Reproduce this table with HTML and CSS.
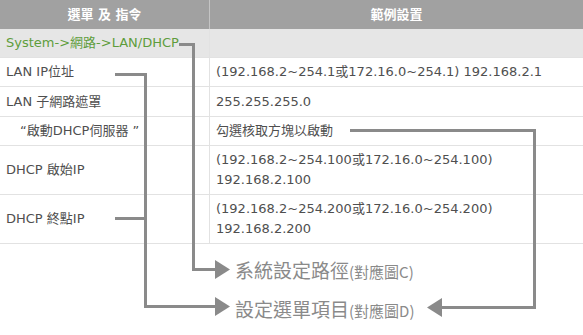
FILE: index.html
```html
<!DOCTYPE html>
<html lang="zh-Hant">
<head>
<meta charset="utf-8">
<title>LAN/DHCP</title>
<link rel="stylesheet" href="styles.css">
</head>
<body>
<div class="page">
  <div class="table">
    <div class="row head">
      <div class="cell">選單 及 指令</div>
      <div class="cell">範例設置</div>
    </div>
    <div class="row path">
      <div class="cell green">System-&gt;網路-&gt;LAN/DHCP</div>
      <div class="cell"></div>
    </div>
    <div class="row">
      <div class="cell">LAN IP位址</div>
      <div class="cell">(192.168.2~254.1或172.16.0~254.1) 192.168.2.1</div>
    </div>
    <div class="row tall1">
      <div class="cell">LAN 子網路遮罩</div>
      <div class="cell">255.255.255.0</div>
    </div>
    <div class="row">
      <div class="cell indent">“啟動DHCP伺服器 ”</div>
      <div class="cell">勾選核取方塊以啟動</div>
    </div>
    <div class="row double">
      <div class="cell">DHCP 啟始IP</div>
      <div class="cell">(192.168.2~254.100或172.16.0~254.100)<br>192.168.2.100</div>
    </div>
    <div class="row double">
      <div class="cell">DHCP 終點IP</div>
      <div class="cell">(192.168.2~254.200或172.16.0~254.200)<br>192.168.2.200</div>
    </div>
  </div>
  <div class="notes">
    <div class="note">系統設定路徑<small>(對應圖C)</small></div>
    <div class="note">設定選單項目<small>(對應圖D)</small></div>
  </div>
  <svg class="connectors" width="583" height="335" viewBox="0 0 583 335">
    <g fill="none" stroke="#8a8a8a" stroke-width="3">
      <polyline points="179,44.5 193.5,44.5 193.5,269.5 216,269.5"/>
      <polyline points="115,74.5 145.5,74.5 145.5,306.5 216,306.5"/>
      <polyline points="115,218.5 145.5,218.5"/>
      <polyline points="350,130.5 534.5,130.5 534.5,307.5 441,307.5"/>
    </g>
    <g fill="#8a8a8a">
      <polygon points="215,260 230,269.5 215,279"/>
      <polygon points="215,297 230,306.5 215,316"/>
      <polygon points="442,298 427,307.5 442,317"/>
    </g>
  </svg>
</div>
</body>
</html>
```
FILE: styles.css
```css
html, body {
  margin: 0;
  padding: 0;
  background: #ffffff;
}

.page {
  position: relative;
  width: 583px;
  height: 335px;
  overflow: hidden;
}

.table {
  font-family: "DejaVu Sans", "Noto Sans CJK TC", sans-serif;
  font-size: 13px;
  color: #4f4f4f;
}

.row {
  display: grid;
  grid-template-columns: 209px 1fr;
  border-bottom: 1px solid #e2e2e2;
}

.cell {
  display: flex;
  align-items: center;
  min-height: 28px;
  padding: 0 6px;
  line-height: 20px;
}

.cell + .cell {
  border-left: 1px solid #e2e2e2;
}

.head {
  background: #a1a1a1;
  border-bottom: 0;
}

.head .cell {
  min-height: 29px;
  justify-content: center;
  color: #ffffff;
  font-weight: bold;
}

.head .cell + .cell {
  border-left: 1px solid #c4c4c4;
}

.path {
  background: #e6e6e6;
}

.green {
  color: #5e9d3c;
}

.tall1 .cell {
  min-height: 29px;
}

.indent {
  padding-left: 20px;
}

.double .cell {
  min-height: 48px;
  padding-top: 4px;
  padding-bottom: 4px;
  box-sizing: border-box;
}

.notes {
  display: flex;
  flex-direction: column;
  gap: 17px;
  padding: 16px 0 0 235px;
  font-family: "Noto Sans CJK TC", sans-serif;
  color: #8a8a8a;
}

.note {
  font-size: 19px;
  line-height: 20px;
  white-space: nowrap;
}

.note small {
  font-size: 15px;
}

.connectors {
  position: absolute;
  left: 0;
  top: 0;
  pointer-events: none;
}
```
